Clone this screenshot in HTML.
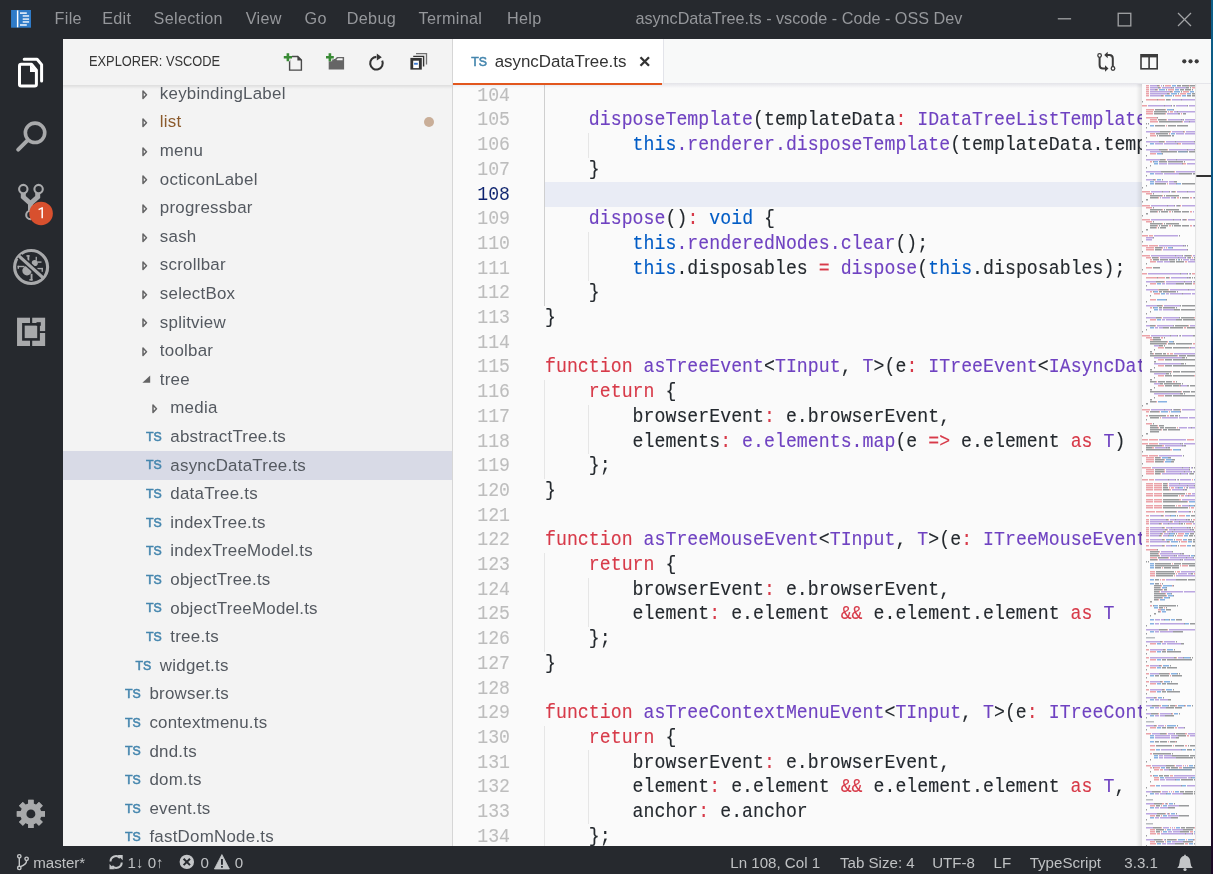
<!DOCTYPE html><html><head><meta charset="utf-8"><style>
*{margin:0;padding:0;box-sizing:border-box}
html,body{width:1213px;height:874px;overflow:hidden;-webkit-font-smoothing:antialiased;background:linear-gradient(#0d5f88 0px,#0b4f7e 300px,#0c1f52 360px,#0d1a44 430px,#1e0b2a 450px,#1c0a26 874px);font-family:"Liberation Sans",sans-serif}
.a{position:absolute}
#titlebar,#sidebar,#editor,#statusbar{will-change:transform}
#titlebar{left:0;top:0;width:1211px;height:39px;background:#26292e;color:#95979b;font-size:16.2px}
#titlebar .m{position:absolute;top:-1px;line-height:39px;white-space:nowrap;letter-spacing:0.3px}
#activity{left:0;top:39px;width:63px;height:807px;background:#26292e}
#sidebar{left:63px;top:39px;width:390px;height:807px;background:#f3f3f3;overflow:hidden}
#sbborder{left:452px;top:39px;width:1px;height:807px;background:#d6d6d6}
#sbhead{position:absolute;left:0;top:0;width:389px;height:46px;background:#f3f3f3;z-index:2}
#sbshadow{position:absolute;left:0;top:46px;width:389px;height:4px;z-index:2;background:linear-gradient(rgba(0,0,0,0.09),rgba(0,0,0,0))}
#sbhead .t{position:absolute;left:26px;top:-1px;line-height:46px;font-size:14.3px;color:#353535;transform:scaleX(0.897);transform-origin:0 0;white-space:nowrap}
.row{position:absolute;left:0;width:389px;height:28.6px;font-size:16.9px;line-height:28.6px;color:#545960;white-space:nowrap}
.row .tx{position:absolute;top:0.3px;letter-spacing:0.25px}
.row.sel{background:#d8dae6}
.ts{position:absolute;top:0;font-size:12.3px;line-height:28.6px;color:#4586ae;-webkit-text-stroke:0.55px #4586ae}
#editor{left:453px;top:39px;width:758px;height:807px;background:#fafafa;overflow:hidden}
#tabs{position:absolute;left:0;top:0;width:758px;height:44px;background:#f8f9f9}
#statusbar{left:0;top:846px;width:1211px;height:28px;background:#26292e;color:#bfc1c3;font-size:15.1px}
#statusbar .s{position:absolute;top:3px;line-height:28px;white-space:nowrap}
.ln{position:absolute;left:0;width:57px;height:24.7px;line-height:24.7px;text-align:right;font-family:"Liberation Mono",monospace;font-size:18.2px;color:#c4c4c4;-webkit-text-stroke:0.12px #c4c4c4;transform:scaleY(1.12);transform-origin:0 17.2px}
.cl{position:absolute;left:92px;height:24.7px;line-height:24.7px;font-family:"Liberation Mono",monospace;font-size:18.2px;color:#24292e;white-space:pre;letter-spacing:0.035px;-webkit-text-stroke:0.12px;transform:scaleY(1.12);transform-origin:0 17.2px}
.k{color:#d73a49}.f{color:#6f42c1}.c{color:#005cc5}
</style></head><body>
<div id="titlebar" class="a">
<svg class="a" style="left:11px;top:10px" width="20" height="18" viewBox="11 10 20 18"><rect x="11.05" y="10" width="19.95" height="17.7" fill="#2f7bc8"/><rect x="16.9" y="10.4" width="1.45" height="16.9" fill="#fff"/><g fill="#e8f0fa"><rect x="20" y="12.3" width="6.8" height="1.6"/><rect x="22.7" y="15.2" width="6.4" height="1.5"/><rect x="22.7" y="18.35" width="6.4" height="1.5"/><rect x="22.7" y="21.2" width="6.4" height="1.5"/><rect x="20" y="24.2" width="6.8" height="1.6"/></g></svg>
<span class="m" style="left:54.6px">File</span>
<span class="m" style="left:102.2px">Edit</span>
<span class="m" style="left:153.6px">Selection</span>
<span class="m" style="left:245.8px">View</span>
<span class="m" style="left:304.5px">Go</span>
<span class="m" style="left:346.8px">Debug</span>
<span class="m" style="left:418.6px">Terminal</span>
<span class="m" style="left:507px">Help</span>
<span class="m" style="left:635.4px;letter-spacing:0">asyncDataTree.ts - vscode - Code - OSS Dev</span>
<svg class="a" style="left:1050px;top:5px" width="150" height="30"><g stroke="#a2a3a5" stroke-width="1.3" fill="none"><line x1="7.8" y1="13.8" x2="21.1" y2="13.8"/><rect x="68.2" y="8.3" width="12.6" height="12.6"/><line x1="128" y1="8" x2="141" y2="21"/><line x1="141" y1="8" x2="128" y2="21"/></g></svg>
</div>
<div id="activity" class="a">
</div>
<svg class="a" style="left:0;top:0" width="63" height="874" viewBox="0 0 63 874">
<g fill="none" stroke="#ffffff" stroke-width="3" stroke-linejoin="round" stroke-linecap="round"><path d="M19.5 66 Q19.5 64.3 21.2 64.3 L31.5 64.3 L36.4 70.2 L36.4 84.3 Q36.4 86 34.7 86 L21.2 86 Q19.5 86 19.5 84.3 Z"/><path d="M24.2 59.2 L37.1 59.2 L41.6 64.6 L41.6 81"/></g><path d="M30 64.5 L30 72.1 L36.5 72.1 Z" fill="#fff"/>
<g fill="none" stroke="#a8a9ab" stroke-linecap="round"><circle cx="35.05" cy="132.8" r="9.7" stroke-width="3.6"/><line x1="18.2" y1="149.7" x2="27.5" y2="140.4" stroke-width="4"/></g>
<g fill="none" stroke="#a8a9ab"><circle cx="23.3" cy="189.1" r="4.2" stroke-width="2.1"/><circle cx="38.6" cy="189.1" r="4.2" stroke-width="2.1"/><circle cx="30.4" cy="214.9" r="4.2" stroke-width="2.1"/><path d="M23.3 193 L23.3 197 L30.5 203.5 L37.7 197 L37.7 193 M30.5 203.5 L30.5 211" stroke-width="5" stroke-linejoin="miter"/></g>
<circle cx="41.05" cy="213.45" r="11.8" fill="#d8502e"/><path d="M38.6 209.6 L42.2 207.8 L42.2 218.2" fill="none" stroke="#fff" stroke-width="1.5" stroke-linejoin="round"/>
<g fill="#a8a9ab"><circle cx="31.1" cy="267" r="16.5" fill="none" stroke="#a8a9ab" stroke-width="3.1"/><circle cx="34.8" cy="263" r="3.1"/><circle cx="27" cy="270.7" r="4.7"/><rect x="27.4" y="255.2" width="1.9" height="5.5"/><rect x="26.4" y="255.2" width="3.2" height="1.4"/><rect x="35.6" y="256.8" width="1.3" height="3.8"/><rect x="37.6" y="261.4" width="3.9" height="1.4"/><rect x="17.6" y="265.8" width="6.9" height="1.4"/><rect x="17.6" y="265.8" width="1.4" height="3"/><rect x="37.2" y="267.9" width="5.7" height="1.4"/><rect x="41.6" y="267.9" width="1.3" height="3.9"/><rect x="30.6" y="273.8" width="1.9" height="6.7"/><rect x="29.3" y="279.1" width="3.3" height="1.4"/></g><line x1="19.3" y1="256.3" x2="42.2" y2="277" stroke="#26292e" stroke-width="6"/><line x1="18.8" y1="255.9" x2="42.6" y2="277.4" stroke="#a8a9ab" stroke-width="3.3"/>
<g><rect x="17.04" y="317.7" width="28.1" height="28.3" fill="#a8a9ab"/><rect x="22.1" y="323" width="17.8" height="17.7" fill="#26292e"/><rect x="24.7" y="325.6" width="12.5" height="12.5" fill="#a8a9ab"/><rect x="30" y="317" width="2.2" height="6.5" fill="#26292e"/><rect x="30" y="340" width="2.2" height="7" fill="#26292e"/><rect x="39.5" y="331.1" width="6.5" height="1.9" fill="#26292e"/><rect x="36.5" y="322.2" width="4.3" height="3.6" fill="#26292e"/></g>
<g fill="#a8a9ab"><circle cx="30.9" cy="813.9" r="10.6"/><rect x="28.2" y="799.8" width="5.4" height="28.2" transform="rotate(0 30.9 813.9)"/><rect x="28.2" y="799.8" width="5.4" height="28.2" transform="rotate(45 30.9 813.9)"/><rect x="28.2" y="799.8" width="5.4" height="28.2" transform="rotate(90 30.9 813.9)"/><rect x="28.2" y="799.8" width="5.4" height="28.2" transform="rotate(135 30.9 813.9)"/><rect x="28.2" y="799.8" width="5.4" height="28.2" transform="rotate(180 30.9 813.9)"/><rect x="28.2" y="799.8" width="5.4" height="28.2" transform="rotate(225 30.9 813.9)"/><rect x="28.2" y="799.8" width="5.4" height="28.2" transform="rotate(270 30.9 813.9)"/><rect x="28.2" y="799.8" width="5.4" height="28.2" transform="rotate(315 30.9 813.9)"/></g><circle cx="30.9" cy="813.9" r="4.45" fill="#26292e"/>
</svg>
<div id="sidebar" class="a"><div id="sbhead"><span class="t">EXPLORER: VSCODE</span><svg class="a" style="left:0;top:0" width="389" height="46" viewBox="63 39 389 46"><path d="M289.6 56.5 L297.8 56.5 L301.4 60 L301.4 70.1 L289.6 70.1 Z" fill="#f3f3f3" stroke="#4a4a4a" stroke-width="1.4"/><path d="M297.4 55.8 L302.1 60.5 L297.4 60.5 Z" fill="#424242"/><path d="M283.8 57.2 L292 57.2 M287.9 53.2 L287.9 61.3" stroke="#f3f3f3" stroke-width="4.6"/><path d="M283.8 57.2 L292 57.2 M287.9 53.2 L287.9 61.3" stroke="#388a34" stroke-width="2.6"/><path d="M328.7 59 L335 59 L337 57 L344.1 57 L344.1 69.5 L328.7 69.5 Z" fill="#656565"/><path d="M336.5 59.3 L338 58.3 L342.6 58.3 L342.6 60.3 L337 60.3 Z" fill="#f3f3f3"/><path d="M326 57.2 L333.8 57.2 M329.9 53.2 L329.9 61.3" stroke="#f3f3f3" stroke-width="4.5"/><path d="M326 57.2 L333.8 57.2 M329.9 53.2 L329.9 61.3" stroke="#388a34" stroke-width="2.6"/><path d="M376.4 56.9 A6.3 6.3 0 1 0 382.2 60.6" fill="none" stroke="#333" stroke-width="2.1"/><path d="M376.8 53.6 L381.8 57.2 L376.8 60.6 Z" fill="#333"/><path d="M416 53.6 L426.5 53.6 L426.5 64.4" fill="none" stroke="#707070" stroke-width="1.3"/><path d="M413.2 56.4 L423.6 56.4 L423.6 66.5" fill="none" stroke="#333" stroke-width="1.4"/><rect x="410.4" y="57.9" width="11.4" height="11.7" fill="#333"/><rect x="413.2" y="60.7" width="5.7" height="7.4" fill="#fff"/><rect x="414.1" y="62.8" width="3.7" height="1.9" fill="#3b7bd4"/></svg></div><div id="sbshadow"></div>
<div class="row" style="top:40.50px">
<svg class="a" style="left:78.80000000000001px;top:9px" width="8" height="11"><path d="M1.0 2.1 L4.5 5.75 L1.0 9.4 Z" fill="none" stroke="#646465" stroke-width="1.5" stroke-linejoin="round"/></svg>
<span class="tx" style="left:96.80000000000001px"><span>keybindingLabel</span></span>
</div>
<div class="row" style="top:69.10px">
<svg class="a" style="left:78.80000000000001px;top:9px" width="8" height="11"><path d="M1.0 2.1 L4.5 5.75 L1.0 9.4 Z" fill="none" stroke="#646465" stroke-width="1.5" stroke-linejoin="round"/></svg>
<span class="tx" style="left:96.80000000000001px"><span style="color:#8b5a2b">list</span></span>
<div class="a" style="left:361px;top:9.3px;width:10px;height:10px;border-radius:50%;background:#c9ae98"></div>
</div>
<div class="row" style="top:97.70px">
<svg class="a" style="left:78.80000000000001px;top:9px" width="8" height="11"><path d="M1.0 2.1 L4.5 5.75 L1.0 9.4 Z" fill="none" stroke="#646465" stroke-width="1.5" stroke-linejoin="round"/></svg>
<span class="tx" style="left:96.80000000000001px"><span>menu</span></span>
</div>
<div class="row" style="top:126.30px">
<svg class="a" style="left:78.80000000000001px;top:9px" width="8" height="11"><path d="M1.0 2.1 L4.5 5.75 L1.0 9.4 Z" fill="none" stroke="#646465" stroke-width="1.5" stroke-linejoin="round"/></svg>
<span class="tx" style="left:96.80000000000001px"><span>octiconLabel</span></span>
</div>
<div class="row" style="top:154.90px">
<svg class="a" style="left:78.80000000000001px;top:9px" width="8" height="11"><path d="M1.0 2.1 L4.5 5.75 L1.0 9.4 Z" fill="none" stroke="#646465" stroke-width="1.5" stroke-linejoin="round"/></svg>
<span class="tx" style="left:96.80000000000001px"><span>progressbar</span></span>
</div>
<div class="row" style="top:183.50px">
<svg class="a" style="left:78.80000000000001px;top:9px" width="8" height="11"><path d="M1.0 2.1 L4.5 5.75 L1.0 9.4 Z" fill="none" stroke="#646465" stroke-width="1.5" stroke-linejoin="round"/></svg>
<span class="tx" style="left:96.80000000000001px"><span>sash</span></span>
</div>
<div class="row" style="top:212.10px">
<svg class="a" style="left:78.80000000000001px;top:9px" width="8" height="11"><path d="M1.0 2.1 L4.5 5.75 L1.0 9.4 Z" fill="none" stroke="#646465" stroke-width="1.5" stroke-linejoin="round"/></svg>
<span class="tx" style="left:96.80000000000001px"><span>scrollbar</span></span>
</div>
<div class="row" style="top:240.70px">
<svg class="a" style="left:78.80000000000001px;top:9px" width="8" height="11"><path d="M1.0 2.1 L4.5 5.75 L1.0 9.4 Z" fill="none" stroke="#646465" stroke-width="1.5" stroke-linejoin="round"/></svg>
<span class="tx" style="left:96.80000000000001px"><span>selectBox</span></span>
</div>
<div class="row" style="top:269.30px">
<svg class="a" style="left:78.80000000000001px;top:9px" width="8" height="11"><path d="M1.0 2.1 L4.5 5.75 L1.0 9.4 Z" fill="none" stroke="#646465" stroke-width="1.5" stroke-linejoin="round"/></svg>
<span class="tx" style="left:96.80000000000001px"><span>splitview</span></span>
</div>
<div class="row" style="top:297.90px">
<svg class="a" style="left:78.80000000000001px;top:9px" width="8" height="11"><path d="M1.0 2.1 L4.5 5.75 L1.0 9.4 Z" fill="none" stroke="#646465" stroke-width="1.5" stroke-linejoin="round"/></svg>
<span class="tx" style="left:96.80000000000001px"><span>toolbar</span></span>
</div>
<div class="row" style="top:326.50px">
<svg class="a" style="left:78.60000000000001px;top:9.4px" width="9" height="9"><path d="M8.2 0.4 L8.2 7.8 L0.4 7.8 Z" fill="#646465"/></svg>
<span class="tx" style="left:96.80000000000001px"><span>tree</span></span>
</div>
<div class="row" style="top:355.10px">
<svg class="a" style="left:89.30000000000001px;top:9px" width="8" height="11"><path d="M1.0 2.1 L4.5 5.75 L1.0 9.4 Z" fill="none" stroke="#646465" stroke-width="1.5" stroke-linejoin="round"/></svg>
<span class="tx" style="left:107.30000000000001px"><span>media</span></span>
</div>
<div class="row" style="top:383.70px">
<span class="ts" style="left:83.00000000000001px">TS</span>
<span class="tx" style="left:107.30000000000001px"><span>abstractTree.ts</span></span>
</div>
<div class="row sel" style="top:412.30px">
<span class="ts" style="left:83.00000000000001px">TS</span>
<span class="tx" style="left:107.30000000000001px"><span>asyncDataTree.ts</span></span>
</div>
<div class="row" style="top:440.90px">
<span class="ts" style="left:83.00000000000001px">TS</span>
<span class="tx" style="left:107.30000000000001px"><span>dataTree.ts</span></span>
</div>
<div class="row" style="top:469.50px">
<span class="ts" style="left:83.00000000000001px">TS</span>
<span class="tx" style="left:107.30000000000001px"><span>indexTree.ts</span></span>
</div>
<div class="row" style="top:498.10px">
<span class="ts" style="left:83.00000000000001px">TS</span>
<span class="tx" style="left:107.30000000000001px"><span>indexTreeModel.ts</span></span>
</div>
<div class="row" style="top:526.70px">
<span class="ts" style="left:83.00000000000001px">TS</span>
<span class="tx" style="left:107.30000000000001px"><span>objectTree.ts</span></span>
</div>
<div class="row" style="top:555.30px">
<span class="ts" style="left:83.00000000000001px">TS</span>
<span class="tx" style="left:107.30000000000001px"><span>objectTreeModel.ts</span></span>
</div>
<div class="row" style="top:583.90px">
<span class="ts" style="left:83.00000000000001px">TS</span>
<span class="tx" style="left:107.30000000000001px"><span>tree.ts</span></span>
</div>
<div class="row" style="top:612.50px">
<span class="ts" style="left:72.50000000000001px">TS</span>
<span class="tx" style="left:96.80000000000001px"><span>widget.ts</span></span>
</div>
<div class="row" style="top:641.10px">
<span class="ts" style="left:62.10000000000001px">TS</span>
<span class="tx" style="left:86.4px"><span>browser.ts</span></span>
</div>
<div class="row" style="top:669.70px">
<span class="ts" style="left:62.10000000000001px">TS</span>
<span class="tx" style="left:86.4px"><span>contextmenu.ts</span></span>
</div>
<div class="row" style="top:698.30px">
<span class="ts" style="left:62.10000000000001px">TS</span>
<span class="tx" style="left:86.4px"><span>dnd.ts</span></span>
</div>
<div class="row" style="top:726.90px">
<span class="ts" style="left:62.10000000000001px">TS</span>
<span class="tx" style="left:86.4px"><span>dom.ts</span></span>
</div>
<div class="row" style="top:755.50px">
<span class="ts" style="left:62.10000000000001px">TS</span>
<span class="tx" style="left:86.4px"><span>event.ts</span></span>
</div>
<div class="row" style="top:784.10px">
<span class="ts" style="left:62.10000000000001px">TS</span>
<span class="tx" style="left:86.4px"><span>fastDomNode.ts</span></span>
</div>
</div><div id="sbborder" class="a"></div>
<div id="editor" class="a">
<div id="tabs">
<div class="a" style="left:0;top:0;width:209.5px;height:44px;background:#ffffff"></div>
<div class="a" style="left:0;top:43.9px;width:209px;height:2.1px;background:#e2571e;z-index:4"></div>
<div class="a" style="left:209.5px;top:0;width:1px;height:44px;background:#e3e4ea"></div>
<span class="a" style="left:18.3px;top:1px;line-height:45px;font-size:12.3px;color:#4586ae;-webkit-text-stroke:0.55px #4586ae">TS</span>
<span class="a" style="left:41.7px;top:0;line-height:45px;font-size:16.9px;color:#333333">asyncDataTree.ts</span>
<svg class="a" style="left:186px;top:17px" width="12" height="11"><path d="M1.5 1.2 L10 9.8 M10 1.2 L1.5 9.8" stroke="#333" stroke-width="2.3"/></svg>
<svg class="a" style="left:640px;top:10px" width="110" height="26" viewBox="1093 49 110 26"><g fill="none" stroke="#3c3c3c" stroke-width="2"><path d="M1099.6 55.5 L1099.6 65 Q1099.6 68.5 1103 68.5 L1106 68.5"/><path d="M1112.8 68 L1112.8 58.5 Q1112.8 55 1109.5 55 L1106.5 55"/></g><circle cx="1099.6" cy="55.5" r="1.8" fill="#fff" stroke="#3c3c3c" stroke-width="1.3"/><circle cx="1113" cy="68.5" r="1.8" fill="#fff" stroke="#3c3c3c" stroke-width="1.3"/><path d="M1105 65.3 L1108.5 68.5 L1105 71.7 Z M1107.7 51.8 L1104.2 55 L1107.7 58.2 Z" fill="#3c3c3c"/><rect x="1141" y="54.8" width="16.2" height="14" fill="none" stroke="#3c3c3c" stroke-width="1.6"/><rect x="1141" y="54.8" width="16.2" height="2.6" fill="#3c3c3c"/><rect x="1148.3" y="55" width="1.6" height="14" fill="#3c3c3c"/><circle cx="1184.3" cy="61.3" r="2.1" fill="#3c3c3c"/><circle cx="1190.5" cy="61.3" r="2.1" fill="#3c3c3c"/><circle cx="1196.7" cy="61.3" r="2.1" fill="#3c3c3c"/></svg>
</div>
<div class="a" style="left:0;top:44px;width:758px;height:5px;background:linear-gradient(rgba(40,40,90,0.11),rgba(40,40,90,0));z-index:3"></div>
<div class="a" style="left:92px;top:143.30px;width:597px;height:24.7px;background:#e9ecf5"></div>
<div class="a" style="left:91px;top:46.00px;width:1px;height:220.80px;background:#cfcfcf"></div>
<div class="a" style="left:134.68px;top:93.90px;width:1px;height:24.70px;background:#e6e6e6"></div>
<div class="a" style="left:134.68px;top:192.70px;width:1px;height:49.40px;background:#e6e6e6"></div>
<div class="a" style="left:91px;top:340.90px;width:1px;height:98.80px;background:#e6e6e6"></div>
<div class="a" style="left:91px;top:513.80px;width:1px;height:98.80px;background:#e6e6e6"></div>
<div class="a" style="left:91px;top:686.70px;width:1px;height:123.50px;background:#e6e6e6"></div>
<div class="a" style="left:134.68px;top:365.60px;width:1px;height:49.40px;background:#e6e6e6"></div>
<div class="a" style="left:134.68px;top:538.50px;width:1px;height:49.40px;background:#e6e6e6"></div>
<div class="a" style="left:134.68px;top:711.40px;width:1px;height:74.10px;background:#e6e6e6"></div>
<div class="a" style="left:0;top:0;width:689px;height:807px;overflow:hidden">
<div class="ln" style="top:44.70px;color:#bdbdbd">104</div>
<div class="ln" style="top:69.40px;color:#bdbdbd">105</div>
<div class="cl" style="top:69.40px">    <span class="f">disposeTemplate</span>(templateData<span class="k">:</span> <span class="f">IDataTreeListTemplateData</span></div>
<div class="ln" style="top:94.10px;color:#bdbdbd">106</div>
<div class="cl" style="top:94.10px">        <span class="c">this</span><span class="f">.renderer.disposeTemplate</span>(templateData.templateData);</div>
<div class="ln" style="top:118.80px;color:#bdbdbd">107</div>
<div class="cl" style="top:118.80px">    }</div>
<div class="ln" style="top:143.50px;color:#0b216f">108</div>
<div class="ln" style="top:168.20px;color:#bdbdbd">109</div>
<div class="cl" style="top:168.20px">    <span class="f">dispose</span>()<span class="k">:</span> <span class="c">void</span> {</div>
<div class="ln" style="top:192.90px;color:#bdbdbd">110</div>
<div class="cl" style="top:192.90px">        <span class="c">this</span><span class="f">.renderedNodes.clear</span>();</div>
<div class="ln" style="top:217.60px;color:#bdbdbd">111</div>
<div class="cl" style="top:217.60px">        <span class="c">this</span>.disposables <span class="k">=</span> <span class="f">dispose</span>(<span class="c">this</span>.disposables);</div>
<div class="ln" style="top:242.30px;color:#bdbdbd">112</div>
<div class="cl" style="top:242.30px">    }</div>
<div class="ln" style="top:267.00px;color:#bdbdbd">113</div>
<div class="cl" style="top:267.00px">}</div>
<div class="ln" style="top:291.70px;color:#bdbdbd">114</div>
<div class="ln" style="top:316.40px;color:#bdbdbd">115</div>
<div class="cl" style="top:316.40px"><span class="k">function</span> <span class="f">asTreeEvent</span><<span class="f">TInput</span>, <span class="f">T</span>>(e<span class="k">:</span> <span class="f">ITreeEvent</span><<span class="f">IAsyncDataTreeNode</span></div>
<div class="ln" style="top:341.10px;color:#bdbdbd">116</div>
<div class="cl" style="top:341.10px">    <span class="k">return</span> {</div>
<div class="ln" style="top:365.80px;color:#bdbdbd">117</div>
<div class="cl" style="top:365.80px">        browserEvent<span class="k">:</span> e.browserEvent,</div>
<div class="ln" style="top:390.50px;color:#bdbdbd">118</div>
<div class="cl" style="top:390.50px">        elements<span class="k">:</span> <span class="f">e.elements.map</span>(e <span class="k">=></span> e.element <span class="k">as</span> <span class="f">T</span>)</div>
<div class="ln" style="top:415.20px;color:#bdbdbd">119</div>
<div class="cl" style="top:415.20px">    };</div>
<div class="ln" style="top:439.90px;color:#bdbdbd">120</div>
<div class="cl" style="top:439.90px">}</div>
<div class="ln" style="top:464.60px;color:#bdbdbd">121</div>
<div class="ln" style="top:489.30px;color:#bdbdbd">122</div>
<div class="cl" style="top:489.30px"><span class="k">function</span> <span class="f">asTreeMouseEvent</span><<span class="f">TInput</span>, <span class="f">T</span>>(e<span class="k">:</span> <span class="f">ITreeMouseEvent</span><<span class="f">IAsyncDataTreeNode</span></div>
<div class="ln" style="top:514.00px;color:#bdbdbd">123</div>
<div class="cl" style="top:514.00px">    <span class="k">return</span> {</div>
<div class="ln" style="top:538.70px;color:#bdbdbd">124</div>
<div class="cl" style="top:538.70px">        browserEvent<span class="k">:</span> e.browserEvent,</div>
<div class="ln" style="top:563.40px;color:#bdbdbd">125</div>
<div class="cl" style="top:563.40px">        element<span class="k">:</span> e.element <span class="k">&amp;&amp;</span> e.element.element <span class="k">as</span> <span class="f">T</span></div>
<div class="ln" style="top:588.10px;color:#bdbdbd">126</div>
<div class="cl" style="top:588.10px">    };</div>
<div class="ln" style="top:612.80px;color:#bdbdbd">127</div>
<div class="cl" style="top:612.80px">}</div>
<div class="ln" style="top:637.50px;color:#bdbdbd">128</div>
<div class="ln" style="top:662.20px;color:#bdbdbd">129</div>
<div class="cl" style="top:662.20px"><span class="k">function</span> <span class="f">asTreeContextMenuEvent</span><<span class="f">TInput</span>, <span class="f">T</span>>(e<span class="k">:</span> <span class="f">ITreeContextMenuEvent</span><<span class="f">IAsyncDataTreeNode</span></div>
<div class="ln" style="top:686.90px;color:#bdbdbd">130</div>
<div class="cl" style="top:686.90px">    <span class="k">return</span> {</div>
<div class="ln" style="top:711.60px;color:#bdbdbd">131</div>
<div class="cl" style="top:711.60px">        browserEvent<span class="k">:</span> e.browserEvent,</div>
<div class="ln" style="top:736.30px;color:#bdbdbd">132</div>
<div class="cl" style="top:736.30px">        element<span class="k">:</span> e.element <span class="k">&amp;&amp;</span> e.element.element <span class="k">as</span> <span class="f">T</span>,</div>
<div class="ln" style="top:761.00px;color:#bdbdbd">133</div>
<div class="cl" style="top:761.00px">        anchor<span class="k">:</span> e.anchor</div>
<div class="ln" style="top:785.70px;color:#bdbdbd">134</div>
<div class="cl" style="top:785.70px">    };</div>
</div>
</div>
<svg class="a" style="left:1136px;top:84px;z-index:2" width="75" height="762" viewBox="1136 84 75 762"><defs><linearGradient id="msh" x1="0" x2="1"><stop offset="0" stop-color="#000" stop-opacity="0"/><stop offset="1" stop-color="#000" stop-opacity="0.10"/></linearGradient></defs><rect x="1136" y="84" width="6" height="762" fill="url(#msh)"/><rect x="1142" y="84" width="54" height="762" fill="#fcfcfc"/><path fill="#d73a49" fill-opacity="0.46" d="M1146 85h3v1.4h-3zM1159 85h1v1.4h-1zM1165 85h6v1.4h-6zM1189 85h1v1.4h-1zM1146 87h3v1.4h-3zM1160 87h1v1.4h-1zM1192 87h3v1.4h-3zM1146 89h3v1.4h-3zM1157 89h1v1.4h-1zM1168 89h6v1.4h-6zM1146 91h3v1.4h-3zM1172 91h1v1.4h-1zM1183 91h6v1.4h-6zM1146 93h3v1.4h-3zM1169 93h1v1.4h-1zM1180 93h6v1.4h-6zM1146 95h3v1.4h-3zM1163 95h1v1.4h-1zM1175 95h6v1.4h-6zM1146 99h11v1.4h-11zM1158 99h7v1.4h-7zM1170 99h1v1.4h-1zM1142 105h5v1.4h-5zM1146 109h8v1.4h-8zM1165 109h1v1.4h-1zM1146 111h7v1.4h-7zM1168 111h1v1.4h-1zM1170 111h3v1.4h-3zM1146 113h7v1.4h-7zM1165 113h1v1.4h-1zM1181 113h1v1.4h-1zM1146 117h11v1.4h-11zM1150 119h7v1.4h-7zM1166 119h1v1.4h-1zM1150 121h8v1.4h-8zM1182 121h1v1.4h-1zM1166 125h1v1.4h-1zM1170 131h1v1.4h-1zM1184 131h1v1.4h-1zM1150 133h5v1.4h-5zM1169 133h1v1.4h-1zM1150 135h6v1.4h-6zM1164 141h1v1.4h-1zM1178 143h3v1.4h-3zM1167 149h1v1.4h-1zM1150 153h6v1.4h-6zM1165 159h1v1.4h-1zM1150 161h2v1.4h-2zM1183 163h3v1.4h-3zM1174 171h1v1.4h-1zM1155 179h1v1.4h-1zM1167 183h1v1.4h-1zM1142 191h8v1.4h-8zM1175 191h1v1.4h-1zM1146 193h6v1.4h-6zM1162 195h1v1.4h-1zM1158 197h1v1.4h-1zM1177 197h2v1.4h-2zM1190 197h2v1.4h-2zM1142 205h8v1.4h-8zM1180 205h1v1.4h-1zM1146 207h6v1.4h-6zM1162 209h1v1.4h-1zM1157 211h1v1.4h-1zM1169 211h2v1.4h-2zM1190 211h2v1.4h-2zM1142 219h8v1.4h-8zM1186 219h1v1.4h-1zM1146 221h6v1.4h-6zM1162 223h1v1.4h-1zM1157 225h1v1.4h-1zM1169 225h2v1.4h-2zM1190 225h2v1.4h-2zM1156 227h1v1.4h-1zM1142 235h6v1.4h-6zM1149 235h4v1.4h-4zM1142 245h6v1.4h-6zM1149 245h9v1.4h-9zM1146 247h8v1.4h-8zM1162 247h1v1.4h-1zM1166 247h1v1.4h-1zM1146 249h8v1.4h-8zM1161 249h1v1.4h-1zM1142 255h8v1.4h-8zM1191 255h1v1.4h-1zM1146 257h5v1.4h-5zM1158 257h1v1.4h-1zM1192 257h1v1.4h-1zM1150 259h2v1.4h-2zM1150 261h6v1.4h-6zM1185 261h2v1.4h-2zM1146 267h6v1.4h-6zM1142 273h5v1.4h-5zM1192 273h3v1.4h-3zM1146 277h11v1.4h-11zM1158 277h7v1.4h-7zM1169 277h1v1.4h-1zM1164 281h1v1.4h-1zM1150 283h6v1.4h-6zM1193 283h2v1.4h-2zM1158 289h1v1.4h-1zM1168 289h1v1.4h-1zM1150 291h2v1.4h-2zM1154 293h6v1.4h-6zM1150 299h6v1.4h-6zM1162 305h1v1.4h-1zM1150 307h2v1.4h-2zM1161 317h1v1.4h-1zM1194 317h1v1.4h-1zM1150 319h6v1.4h-6zM1155 325h1v1.4h-1zM1188 325h1v1.4h-1zM1184 327h2v1.4h-2zM1142 335h8v1.4h-8zM1146 337h6v1.4h-6zM1161 337h2v1.4h-2zM1150 339h3v1.4h-3zM1167 341h1v1.4h-1zM1166 343h1v1.4h-1zM1193 343h2v1.4h-2zM1158 347h6v1.4h-6zM1189 347h1v1.4h-1zM1153 353h1v1.4h-1zM1167 353h2v1.4h-2zM1170 353h3v1.4h-3zM1177 355h1v1.4h-1zM1158 359h6v1.4h-6zM1158 365h6v1.4h-6zM1171 371h1v1.4h-1zM1158 375h6v1.4h-6zM1194 375h1v1.4h-1zM1156 381h1v1.4h-1zM1173 381h2v1.4h-2zM1158 385h6v1.4h-6zM1179 385h1v1.4h-1zM1181 391h1v1.4h-1zM1158 395h6v1.4h-6zM1156 401h1v1.4h-1zM1142 409h8v1.4h-8zM1180 409h1v1.4h-1zM1146 411h3v1.4h-3zM1159 411h1v1.4h-1zM1169 411h1v1.4h-1zM1146 415h2v1.4h-2zM1167 415h2v1.4h-2zM1160 417h1v1.4h-1zM1146 423h6v1.4h-6zM1157 425h1v1.4h-1zM1158 427h1v1.4h-1zM1177 427h1v1.4h-1zM1161 429h1v1.4h-1zM1142 439h6v1.4h-6zM1149 439h9v1.4h-9zM1187 439h7v1.4h-7zM1142 443h6v1.4h-6zM1149 443h9v1.4h-9zM1162 445h1v1.4h-1zM1163 445h1v1.4h-1zM1152 447h1v1.4h-1zM1153 447h1v1.4h-1zM1170 449h1v1.4h-1zM1171 449h1v1.4h-1zM1142 455h6v1.4h-6zM1149 455h9v1.4h-9zM1146 457h8v1.4h-8zM1160 457h1v1.4h-1zM1146 459h8v1.4h-8zM1164 459h1v1.4h-1zM1146 461h8v1.4h-8zM1163 461h1v1.4h-1zM1142 467h9v1.4h-9zM1146 469h8v1.4h-8zM1164 469h1v1.4h-1zM1146 471h8v1.4h-8zM1164 471h1v1.4h-1zM1146 473h8v1.4h-8zM1160 473h1v1.4h-1zM1142 479h6v1.4h-6zM1149 479h5v1.4h-5zM1192 479h1v1.4h-1zM1146 483h7v1.4h-7zM1154 483h8v1.4h-8zM1167 483h1v1.4h-1zM1146 485h7v1.4h-7zM1154 485h8v1.4h-8zM1167 485h1v1.4h-1zM1146 487h7v1.4h-7zM1154 487h8v1.4h-8zM1169 487h1v1.4h-1zM1171 487h3v1.4h-3zM1184 487h1v1.4h-1zM1146 489h7v1.4h-7zM1154 489h8v1.4h-8zM1169 489h1v1.4h-1zM1170 489h1v1.4h-1zM1146 493h7v1.4h-7zM1154 493h8v1.4h-8zM1186 493h1v1.4h-1zM1188 493h3v1.4h-3zM1146 495h7v1.4h-7zM1154 495h8v1.4h-8zM1179 495h1v1.4h-1zM1181 495h3v1.4h-3zM1146 499h7v1.4h-7zM1154 499h8v1.4h-8zM1179 499h1v1.4h-1zM1180 499h1v1.4h-1zM1146 501h7v1.4h-7zM1154 501h8v1.4h-8zM1187 501h1v1.4h-1zM1146 505h7v1.4h-7zM1154 505h8v1.4h-8zM1176 505h1v1.4h-1zM1178 505h3v1.4h-3zM1146 507h7v1.4h-7zM1154 507h8v1.4h-8zM1189 507h1v1.4h-1zM1191 507h3v1.4h-3zM1146 511h9v1.4h-9zM1156 511h8v1.4h-8zM1176 511h1v1.4h-1zM1192 511h1v1.4h-1zM1146 515h3v1.4h-3zM1163 515h1v1.4h-1zM1179 515h6v1.4h-6zM1146 519h3v1.4h-3zM1168 519h1v1.4h-1zM1193 519h2v1.4h-2zM1146 521h3v1.4h-3zM1172 521h1v1.4h-1zM1146 523h3v1.4h-3zM1161 523h1v1.4h-1zM1186 523h6v1.4h-6zM1146 527h3v1.4h-3zM1164 527h1v1.4h-1zM1194 527h1v1.4h-1zM1146 529h3v1.4h-3zM1167 529h1v1.4h-1zM1146 531h3v1.4h-3zM1165 531h1v1.4h-1zM1146 533h3v1.4h-3zM1162 533h1v1.4h-1zM1178 533h6v1.4h-6zM1146 535h3v1.4h-3zM1161 535h1v1.4h-1zM1177 535h6v1.4h-6zM1146 539h3v1.4h-3zM1164 539h1v1.4h-1zM1176 539h6v1.4h-6zM1146 541h3v1.4h-3zM1169 541h1v1.4h-1zM1181 541h6v1.4h-6zM1146 545h3v1.4h-3zM1164 545h1v1.4h-1zM1180 545h6v1.4h-6zM1146 549h11v1.4h-11zM1159 551h1v1.4h-1zM1158 553h1v1.4h-1zM1159 555h1v1.4h-1zM1150 557h7v1.4h-7zM1168 557h1v1.4h-1zM1157 559h1v1.4h-1zM1172 563h1v1.4h-1zM1180 565h1v1.4h-1zM1182 565h6v1.4h-6zM1162 567h1v1.4h-1zM1150 571h5v1.4h-5zM1175 571h1v1.4h-1zM1177 571h3v1.4h-3zM1150 573h5v1.4h-5zM1176 573h1v1.4h-1zM1194 573h1v1.4h-1zM1150 575h5v1.4h-5zM1174 575h1v1.4h-1zM1160 579h1v1.4h-1zM1162 579h3v1.4h-3zM1160 583h1v1.4h-1zM1161 585h1v1.4h-1zM1172 585h1v1.4h-1zM1160 587h1v1.4h-1zM1162 589h1v1.4h-1zM1159 591h1v1.4h-1zM1165 593h1v1.4h-1zM1166 595h1v1.4h-1zM1162 597h1v1.4h-1zM1158 599h1v1.4h-1zM1150 605h2v1.4h-2zM1164 607h1v1.4h-1zM1158 609h3v1.4h-3zM1160 611h1v1.4h-1zM1167 629h1v1.4h-1zM1162 641h1v1.4h-1zM1150 643h6v1.4h-6zM1146 649h3v1.4h-3zM1165 649h1v1.4h-1zM1150 651h6v1.4h-6zM1146 657h3v1.4h-3zM1176 657h1v1.4h-1zM1150 659h6v1.4h-6zM1146 665h3v1.4h-3zM1161 665h1v1.4h-1zM1150 667h6v1.4h-6zM1146 673h3v1.4h-3zM1169 673h1v1.4h-1zM1170 675h1v1.4h-1zM1146 681h3v1.4h-3zM1162 681h1v1.4h-1zM1150 683h6v1.4h-6zM1146 689h3v1.4h-3zM1164 689h1v1.4h-1zM1150 691h6v1.4h-6zM1156 697h1v1.4h-1zM1159 705h1v1.4h-1zM1160 705h1v1.4h-1zM1175 705h1v1.4h-1zM1176 705h1v1.4h-1zM1185 705h1v1.4h-1zM1158 713h1v1.4h-1zM1172 713h1v1.4h-1zM1156 725h1v1.4h-1zM1165 725h1v1.4h-1zM1150 727h6v1.4h-6zM1175 727h2v1.4h-2zM1146 733h5v1.4h-5zM1166 733h1v1.4h-1zM1185 733h1v1.4h-1zM1186 733h1v1.4h-1zM1187 735h2v1.4h-2zM1168 741h1v1.4h-1zM1175 741h1v1.4h-1zM1150 745h5v1.4h-5zM1173 745h1v1.4h-1zM1185 745h2v1.4h-2zM1150 749h5v1.4h-5zM1150 753h2v1.4h-2zM1146 765h5v1.4h-5zM1174 765h1v1.4h-1zM1183 765h1v1.4h-1zM1187 765h1v1.4h-1zM1150 767h2v1.4h-2zM1154 767h6v1.4h-6zM1179 767h3v1.4h-3zM1154 769h5v1.4h-5zM1160 769h3v1.4h-3zM1150 775h2v1.4h-2zM1170 775h3v1.4h-3zM1154 777h5v1.4h-5zM1154 779h5v1.4h-5zM1150 785h5v1.4h-5zM1160 791h1v1.4h-1zM1169 791h1v1.4h-1zM1173 791h1v1.4h-1zM1162 803h1v1.4h-1zM1163 803h1v1.4h-1zM1167 803h1v1.4h-1zM1150 805h5v1.4h-5zM1161 805h1v1.4h-1zM1165 813h1v1.4h-1zM1169 813h1v1.4h-1zM1150 815h5v1.4h-5zM1161 815h1v1.4h-1zM1161 827h1v1.4h-1zM1170 827h1v1.4h-1zM1174 827h1v1.4h-1zM1194 827h1v1.4h-1zM1150 829h5v1.4h-5zM1165 829h1v1.4h-1zM1150 831h5v1.4h-5zM1161 831h1v1.4h-1zM1190 831h3v1.4h-3zM1150 833h6v1.4h-6zM1157 833h3v1.4h-3zM1162 839h1v1.4h-1zM1176 839h1v1.4h-1zM1186 839h1v1.4h-1zM1194 839h1v1.4h-1zM1150 841h5v1.4h-5zM1165 841h1v1.4h-1zM1150 843h6v1.4h-6zM1185 843h3v1.4h-3z"/><path fill="#6f42c1" fill-opacity="0.46" d="M1150 85h7v1.4h-7zM1161 85h1v1.4h-1zM1150 87h8v1.4h-8zM1162 87h9v1.4h-9zM1172 87h1v1.4h-1zM1175 87h11v1.4h-11zM1150 89h5v1.4h-5zM1150 91h20v1.4h-20zM1150 93h17v1.4h-17zM1150 95h11v1.4h-11zM1172 99h9v1.4h-9zM1182 99h13v1.4h-13zM1148 105h16v1.4h-16zM1165 105h6v1.4h-6zM1173 105h1v1.4h-1zM1176 105h11v1.4h-11zM1189 105h6v1.4h-6zM1174 111h3v1.4h-3zM1178 111h17v1.4h-17zM1167 113h11v1.4h-11zM1168 119h13v1.4h-13zM1182 119h1v1.4h-1zM1185 119h10v1.4h-10zM1184 121h5v1.4h-5zM1190 121h5v1.4h-5zM1146 131h14v1.4h-14zM1172 131h11v1.4h-11zM1186 131h9v1.4h-9zM1176 133h8v1.4h-8zM1185 133h10v1.4h-10zM1146 141h13v1.4h-13zM1166 141h9v1.4h-9zM1176 141h18v1.4h-18zM1155 143h8v1.4h-8zM1164 143h13v1.4h-13zM1182 143h13v1.4h-13zM1146 149h13v1.4h-13zM1169 149h18v1.4h-18zM1188 149h6v1.4h-6zM1150 151h11v1.4h-11zM1146 159h14v1.4h-14zM1167 159h9v1.4h-9zM1177 159h18v1.4h-18zM1159 163h8v1.4h-8zM1168 163h14v1.4h-14zM1187 163h8v1.4h-8zM1146 171h15v1.4h-15zM1176 171h19v1.4h-19zM1155 173h8v1.4h-8zM1164 173h15v1.4h-15zM1146 179h7v1.4h-7zM1155 181h13v1.4h-13zM1169 181h5v1.4h-5zM1169 183h7v1.4h-7zM1151 191h11v1.4h-11zM1163 191h6v1.4h-6zM1171 191h1v1.4h-1zM1177 191h10v1.4h-10zM1188 191h7v1.4h-7zM1160 197h1v1.4h-1zM1162 197h8v1.4h-8zM1171 197h3v1.4h-3zM1193 197h1v1.4h-1zM1151 205h16v1.4h-16zM1168 205h6v1.4h-6zM1176 205h1v1.4h-1zM1182 205h13v1.4h-13zM1193 211h1v1.4h-1zM1151 219h22v1.4h-22zM1174 219h6v1.4h-6zM1182 219h1v1.4h-1zM1188 219h7v1.4h-7zM1193 225h1v1.4h-1zM1154 235h24v1.4h-24zM1146 237h7v1.4h-7zM1146 239h6v1.4h-6zM1159 245h24v1.4h-24zM1184 245h1v1.4h-1zM1164 247h1v1.4h-1zM1163 249h24v1.4h-24zM1151 255h24v1.4h-24zM1176 255h6v1.4h-6zM1184 255h1v1.4h-1zM1193 255h2v1.4h-2zM1160 257h18v1.4h-18zM1179 257h6v1.4h-6zM1187 257h1v1.4h-1zM1183 259h6v1.4h-6zM1190 259h4v1.4h-4zM1157 261h6v1.4h-6zM1164 261h6v1.4h-6zM1188 261h7v1.4h-7zM1148 273h32v1.4h-32zM1181 273h6v1.4h-6zM1189 273h1v1.4h-1zM1171 277h16v1.4h-16zM1188 277h1v1.4h-1zM1146 281h10v1.4h-10zM1166 281h18v1.4h-18zM1185 281h6v1.4h-6zM1193 281h1v1.4h-1zM1162 283h3v1.4h-3zM1166 283h10v1.4h-10zM1146 289h12v1.4h-12zM1170 289h18v1.4h-18zM1189 289h6v1.4h-6zM1166 293h3v1.4h-3zM1170 293h12v1.4h-12zM1183 293h8v1.4h-8zM1192 293h3v1.4h-3zM1146 305h11v1.4h-11zM1164 305h16v1.4h-16zM1159 309h3v1.4h-3zM1163 309h11v1.4h-11zM1146 317h10v1.4h-10zM1163 317h16v1.4h-16zM1162 319h3v1.4h-3zM1166 319h10v1.4h-10zM1146 325h4v1.4h-4zM1157 325h16v1.4h-16zM1190 325h5v1.4h-5zM1155 327h3v1.4h-3zM1159 327h4v1.4h-4zM1151 335h19v1.4h-19zM1171 335h6v1.4h-6zM1179 335h1v1.4h-1zM1182 335h11v1.4h-11zM1154 345h5v1.4h-5zM1191 347h4v1.4h-4zM1174 353h21v1.4h-21zM1154 357h28v1.4h-28zM1154 363h27v1.4h-27zM1154 373h12v1.4h-12zM1154 383h6v1.4h-6zM1181 385h6v1.4h-6zM1154 393h26v1.4h-26zM1151 409h13v1.4h-13zM1165 409h6v1.4h-6zM1173 409h1v1.4h-1zM1182 409h13v1.4h-13zM1162 417h16v1.4h-16zM1179 417h9v1.4h-9zM1189 417h6v1.4h-6zM1179 427h8v1.4h-8zM1188 427h3v1.4h-3zM1192 427h3v1.4h-3zM1159 439h27v1.4h-27zM1159 443h21v1.4h-21zM1181 443h1v1.4h-1zM1184 443h11v1.4h-11zM1165 445h17v1.4h-17zM1183 445h1v1.4h-1zM1155 447h11v1.4h-11zM1167 447h1v1.4h-1zM1159 455h23v1.4h-23zM1152 467h30v1.4h-30zM1183 467h6v1.4h-6zM1191 467h1v1.4h-1zM1166 469h23v1.4h-23zM1166 471h18v1.4h-18zM1185 471h6v1.4h-6zM1193 471h1v1.4h-1zM1162 473h18v1.4h-18zM1181 473h6v1.4h-6zM1189 473h1v1.4h-1zM1155 479h13v1.4h-13zM1169 479h6v1.4h-6zM1177 479h1v1.4h-1zM1180 479h11v1.4h-11zM1169 483h10v1.4h-10zM1180 483h15v1.4h-15zM1169 485h18v1.4h-18zM1188 485h6v1.4h-6zM1175 487h3v1.4h-3zM1186 487h1v1.4h-1zM1189 487h6v1.4h-6zM1172 489h11v1.4h-11zM1184 489h1v1.4h-1zM1192 493h3v1.4h-3zM1185 495h3v1.4h-3zM1189 495h6v1.4h-6zM1182 499h13v1.4h-13zM1182 505h7v1.4h-7zM1178 511h11v1.4h-11zM1150 515h11v1.4h-11zM1165 515h5v1.4h-5zM1150 519h16v1.4h-16zM1170 519h5v1.4h-5zM1176 519h10v1.4h-10zM1187 519h1v1.4h-1zM1150 521h20v1.4h-20zM1174 521h5v1.4h-5zM1180 521h10v1.4h-10zM1191 521h1v1.4h-1zM1150 523h9v1.4h-9zM1163 523h5v1.4h-5zM1169 523h10v1.4h-10zM1180 523h1v1.4h-1zM1193 523h2v1.4h-2zM1150 527h12v1.4h-12zM1166 527h5v1.4h-5zM1172 527h15v1.4h-15zM1188 527h1v1.4h-1zM1150 529h15v1.4h-15zM1169 529h5v1.4h-5zM1175 529h15v1.4h-15zM1191 529h1v1.4h-1zM1150 531h13v1.4h-13zM1167 531h5v1.4h-5zM1173 531h21v1.4h-21zM1150 533h10v1.4h-10zM1164 533h5v1.4h-5zM1150 535h9v1.4h-9zM1163 535h5v1.4h-5zM1150 539h12v1.4h-12zM1150 541h17v1.4h-17zM1150 545h12v1.4h-12zM1166 545h5v1.4h-5zM1161 551h11v1.4h-11zM1160 553h20v1.4h-20zM1181 553h1v1.4h-1zM1161 555h13v1.4h-13zM1175 555h1v1.4h-1zM1178 555h11v1.4h-11zM1170 557h16v1.4h-16zM1187 557h6v1.4h-6zM1159 559h21v1.4h-21zM1181 559h1v1.4h-1zM1184 559h11v1.4h-11zM1181 571h14v1.4h-14zM1178 573h9v1.4h-9zM1188 573h3v1.4h-3zM1176 575h19v1.4h-19zM1166 579h10v1.4h-10zM1161 591h22v1.4h-22zM1184 591h11v1.4h-11zM1155 619h5v1.4h-5zM1161 619h3v1.4h-3zM1155 623h4v1.4h-4zM1160 623h24v1.4h-24zM1146 629h13v1.4h-13zM1169 629h26v1.4h-26zM1155 631h4v1.4h-4zM1160 631h13v1.4h-13zM1146 641h14v1.4h-14zM1164 641h11v1.4h-11zM1162 643h4v1.4h-4zM1167 643h14v1.4h-14zM1150 649h13v1.4h-13zM1150 657h24v1.4h-24zM1178 657h5v1.4h-5zM1150 665h9v1.4h-9zM1150 673h9v1.4h-9zM1150 681h10v1.4h-10zM1150 689h12v1.4h-12zM1146 697h8v1.4h-8zM1155 699h4v1.4h-4zM1160 699h8v1.4h-8zM1146 705h6v1.4h-6zM1155 707h4v1.4h-4zM1160 707h6v1.4h-6zM1146 713h5v1.4h-5zM1160 713h11v1.4h-11zM1155 715h4v1.4h-4zM1160 715h5v1.4h-5zM1146 725h8v1.4h-8zM1158 725h6v1.4h-6zM1178 727h6v1.4h-6zM1152 733h8v1.4h-8zM1168 733h6v1.4h-6zM1188 733h7v1.4h-7zM1155 735h15v1.4h-15zM1171 735h7v1.4h-7zM1190 735h5v1.4h-5zM1155 737h15v1.4h-15zM1171 737h5v1.4h-5zM1161 749h20v1.4h-20zM1159 755h4v1.4h-4zM1164 755h8v1.4h-8zM1159 757h4v1.4h-4zM1164 757h12v1.4h-12zM1152 765h14v1.4h-14zM1176 765h6v1.4h-6zM1185 765h1v1.4h-1zM1164 769h5v1.4h-5zM1174 775h21v1.4h-21zM1165 777h22v1.4h-22zM1188 777h3v1.4h-3zM1160 779h5v1.4h-5zM1166 779h9v1.4h-9zM1161 785h20v1.4h-20zM1187 785h8v1.4h-8zM1146 791h6v1.4h-6zM1162 791h6v1.4h-6zM1171 791h1v1.4h-1zM1155 793h4v1.4h-4zM1160 793h6v1.4h-6zM1172 793h11v1.4h-11zM1146 803h8v1.4h-8zM1165 803h1v1.4h-1zM1168 805h11v1.4h-11zM1155 807h4v1.4h-4zM1160 807h8v1.4h-8zM1146 813h11v1.4h-11zM1167 813h1v1.4h-1zM1168 815h11v1.4h-11zM1155 817h4v1.4h-4zM1160 817h11v1.4h-11zM1146 827h7v1.4h-7zM1163 827h6v1.4h-6zM1172 827h1v1.4h-1zM1172 829h11v1.4h-11zM1168 831h4v1.4h-4zM1173 831h7v1.4h-7zM1161 833h24v1.4h-24zM1186 833h6v1.4h-6zM1194 833h1v1.4h-1zM1146 839h8v1.4h-8zM1164 839h1v1.4h-1zM1172 841h11v1.4h-11zM1162 843h4v1.4h-4zM1167 843h8v1.4h-8z"/><path fill="#24292e" fill-opacity="0.46" d="M1157 85h1v1.4h-1zM1158 85h1v1.4h-1zM1163 85h1v1.4h-1zM1177 85h4v1.4h-4zM1182 85h7v1.4h-7zM1190 85h1v1.4h-1zM1191 85h4v1.4h-4zM1158 87h1v1.4h-1zM1159 87h1v1.4h-1zM1171 87h1v1.4h-1zM1173 87h1v1.4h-1zM1186 87h1v1.4h-1zM1187 87h1v1.4h-1zM1188 87h1v1.4h-1zM1190 87h1v1.4h-1zM1155 89h1v1.4h-1zM1156 89h1v1.4h-1zM1166 89h1v1.4h-1zM1180 89h4v1.4h-4zM1185 89h5v1.4h-5zM1190 89h1v1.4h-1zM1192 89h1v1.4h-1zM1170 91h1v1.4h-1zM1171 91h1v1.4h-1zM1181 91h1v1.4h-1zM1167 93h1v1.4h-1zM1168 93h1v1.4h-1zM1178 93h1v1.4h-1zM1192 93h3v1.4h-3zM1161 95h1v1.4h-1zM1162 95h1v1.4h-1zM1173 95h1v1.4h-1zM1187 95h4v1.4h-4zM1192 95h3v1.4h-3zM1157 99h1v1.4h-1zM1166 99h4v1.4h-4zM1181 99h1v1.4h-1zM1142 101h1v1.4h-1zM1164 105h1v1.4h-1zM1171 105h1v1.4h-1zM1174 105h1v1.4h-1zM1187 105h1v1.4h-1zM1155 109h10v1.4h-10zM1173 109h1v1.4h-1zM1154 111h13v1.4h-13zM1177 111h1v1.4h-1zM1154 113h11v1.4h-11zM1178 113h1v1.4h-1zM1179 113h1v1.4h-1zM1183 113h1v1.4h-1zM1184 113h1v1.4h-1zM1185 113h1v1.4h-1zM1157 117h1v1.4h-1zM1158 119h8v1.4h-8zM1181 119h1v1.4h-1zM1183 119h1v1.4h-1zM1159 121h23v1.4h-23zM1189 121h1v1.4h-1zM1146 123h1v1.4h-1zM1148 123h1v1.4h-1zM1155 125h10v1.4h-10zM1168 125h8v1.4h-8zM1177 125h10v1.4h-10zM1187 125h1v1.4h-1zM1146 127h1v1.4h-1zM1160 131h1v1.4h-1zM1161 131h9v1.4h-9zM1183 131h1v1.4h-1zM1156 133h12v1.4h-12zM1157 135h1v1.4h-1zM1159 135h12v1.4h-12zM1172 135h1v1.4h-1zM1173 135h1v1.4h-1zM1146 137h1v1.4h-1zM1159 141h1v1.4h-1zM1160 141h4v1.4h-4zM1175 141h1v1.4h-1zM1194 141h1v1.4h-1zM1177 143h1v1.4h-1zM1146 145h1v1.4h-1zM1159 149h1v1.4h-1zM1160 149h7v1.4h-7zM1187 149h1v1.4h-1zM1194 149h1v1.4h-1zM1161 151h1v1.4h-1zM1162 151h14v1.4h-14zM1176 151h1v1.4h-1zM1187 151h1v1.4h-1zM1189 151h6v1.4h-6zM1162 153h1v1.4h-1zM1146 155h1v1.4h-1zM1160 159h1v1.4h-1zM1161 159h4v1.4h-4zM1176 159h1v1.4h-1zM1153 161h1v1.4h-1zM1159 161h8v1.4h-8zM1168 161h14v1.4h-14zM1182 161h1v1.4h-1zM1184 161h1v1.4h-1zM1182 163h1v1.4h-1zM1150 165h1v1.4h-1zM1146 167h1v1.4h-1zM1161 171h1v1.4h-1zM1162 171h12v1.4h-12zM1179 173h1v1.4h-1zM1180 173h12v1.4h-12zM1193 173h2v1.4h-2zM1146 175h1v1.4h-1zM1153 179h1v1.4h-1zM1154 179h1v1.4h-1zM1162 179h1v1.4h-1zM1174 181h1v1.4h-1zM1175 181h1v1.4h-1zM1176 181h1v1.4h-1zM1155 183h11v1.4h-11zM1176 183h1v1.4h-1zM1182 183h11v1.4h-11zM1193 183h1v1.4h-1zM1194 183h1v1.4h-1zM1146 185h1v1.4h-1zM1142 187h1v1.4h-1zM1162 191h1v1.4h-1zM1169 191h1v1.4h-1zM1172 191h1v1.4h-1zM1173 191h1v1.4h-1zM1174 191h1v1.4h-1zM1187 191h1v1.4h-1zM1153 193h1v1.4h-1zM1150 195h12v1.4h-12zM1164 195h1v1.4h-1zM1166 195h12v1.4h-12zM1178 195h1v1.4h-1zM1150 197h8v1.4h-8zM1174 197h1v1.4h-1zM1175 197h1v1.4h-1zM1180 197h1v1.4h-1zM1182 197h7v1.4h-7zM1194 197h1v1.4h-1zM1146 199h1v1.4h-1zM1147 199h1v1.4h-1zM1142 201h1v1.4h-1zM1167 205h1v1.4h-1zM1174 205h1v1.4h-1zM1177 205h1v1.4h-1zM1178 205h1v1.4h-1zM1179 205h1v1.4h-1zM1153 207h1v1.4h-1zM1150 209h12v1.4h-12zM1164 209h1v1.4h-1zM1166 209h12v1.4h-12zM1178 209h1v1.4h-1zM1150 211h7v1.4h-7zM1159 211h1v1.4h-1zM1161 211h7v1.4h-7zM1172 211h1v1.4h-1zM1174 211h7v1.4h-7zM1182 211h7v1.4h-7zM1146 213h1v1.4h-1zM1147 213h1v1.4h-1zM1142 215h1v1.4h-1zM1173 219h1v1.4h-1zM1180 219h1v1.4h-1zM1183 219h1v1.4h-1zM1184 219h1v1.4h-1zM1185 219h1v1.4h-1zM1153 221h1v1.4h-1zM1150 223h12v1.4h-12zM1164 223h1v1.4h-1zM1166 223h12v1.4h-12zM1178 223h1v1.4h-1zM1150 225h7v1.4h-7zM1159 225h1v1.4h-1zM1161 225h7v1.4h-7zM1172 225h1v1.4h-1zM1174 225h7v1.4h-7zM1182 225h7v1.4h-7zM1194 225h1v1.4h-1zM1150 227h6v1.4h-6zM1158 227h1v1.4h-1zM1160 227h6v1.4h-6zM1146 229h1v1.4h-1zM1147 229h1v1.4h-1zM1142 231h1v1.4h-1zM1179 235h1v1.4h-1zM1153 237h1v1.4h-1zM1142 241h1v1.4h-1zM1183 245h1v1.4h-1zM1185 245h1v1.4h-1zM1187 245h1v1.4h-1zM1155 247h7v1.4h-7zM1172 247h1v1.4h-1zM1155 249h6v1.4h-6zM1187 249h1v1.4h-1zM1142 251h1v1.4h-1zM1175 255h1v1.4h-1zM1182 255h1v1.4h-1zM1185 255h1v1.4h-1zM1186 255h1v1.4h-1zM1187 255h4v1.4h-4zM1152 257h6v1.4h-6zM1178 257h1v1.4h-1zM1185 257h1v1.4h-1zM1188 257h1v1.4h-1zM1189 257h1v1.4h-1zM1190 257h1v1.4h-1zM1194 257h1v1.4h-1zM1153 259h1v1.4h-1zM1154 259h5v1.4h-5zM1160 259h8v1.4h-8zM1169 259h6v1.4h-6zM1176 259h1v1.4h-1zM1179 259h1v1.4h-1zM1181 259h1v1.4h-1zM1194 259h1v1.4h-1zM1170 261h1v1.4h-1zM1171 261h4v1.4h-4zM1176 261h8v1.4h-8zM1146 263h1v1.4h-1zM1153 267h6v1.4h-6zM1159 267h1v1.4h-1zM1142 269h1v1.4h-1zM1180 273h1v1.4h-1zM1187 273h1v1.4h-1zM1190 273h1v1.4h-1zM1157 277h1v1.4h-1zM1166 277h3v1.4h-3zM1187 277h1v1.4h-1zM1189 277h1v1.4h-1zM1190 277h1v1.4h-1zM1192 277h1v1.4h-1zM1194 277h1v1.4h-1zM1156 281h1v1.4h-1zM1157 281h7v1.4h-7zM1184 281h1v1.4h-1zM1191 281h1v1.4h-1zM1194 281h1v1.4h-1zM1176 283h1v1.4h-1zM1177 283h7v1.4h-7zM1185 283h7v1.4h-7zM1146 285h1v1.4h-1zM1159 289h1v1.4h-1zM1160 289h8v1.4h-8zM1188 289h1v1.4h-1zM1153 291h1v1.4h-1zM1159 291h3v1.4h-3zM1163 291h12v1.4h-12zM1175 291h1v1.4h-1zM1177 291h1v1.4h-1zM1182 293h1v1.4h-1zM1150 295h1v1.4h-1zM1166 299h1v1.4h-1zM1146 301h1v1.4h-1zM1157 305h1v1.4h-1zM1158 305h4v1.4h-4zM1180 305h1v1.4h-1zM1182 305h13v1.4h-13zM1153 307h1v1.4h-1zM1159 307h3v1.4h-3zM1163 307h11v1.4h-11zM1174 307h1v1.4h-1zM1176 307h1v1.4h-1zM1174 309h1v1.4h-1zM1175 309h4v1.4h-4zM1179 309h1v1.4h-1zM1181 309h13v1.4h-13zM1194 309h1v1.4h-1zM1150 311h1v1.4h-1zM1146 313h1v1.4h-1zM1156 317h1v1.4h-1zM1157 317h4v1.4h-4zM1179 317h1v1.4h-1zM1181 317h13v1.4h-13zM1176 319h1v1.4h-1zM1177 319h4v1.4h-4zM1181 319h1v1.4h-1zM1183 319h12v1.4h-12zM1146 321h1v1.4h-1zM1150 325h1v1.4h-1zM1151 325h4v1.4h-4zM1173 325h1v1.4h-1zM1175 325h13v1.4h-13zM1163 327h1v1.4h-1zM1164 327h4v1.4h-4zM1168 327h1v1.4h-1zM1170 327h13v1.4h-13zM1187 327h8v1.4h-8zM1146 329h1v1.4h-1zM1142 331h1v1.4h-1zM1170 335h1v1.4h-1zM1177 335h1v1.4h-1zM1180 335h1v1.4h-1zM1193 335h1v1.4h-1zM1194 335h1v1.4h-1zM1153 337h7v1.4h-7zM1164 337h1v1.4h-1zM1153 339h7v1.4h-7zM1160 339h1v1.4h-1zM1150 341h17v1.4h-17zM1173 341h1v1.4h-1zM1150 343h16v1.4h-16zM1168 343h7v1.4h-7zM1176 343h16v1.4h-16zM1159 345h1v1.4h-1zM1160 345h2v1.4h-2zM1162 345h1v1.4h-1zM1164 345h1v1.4h-1zM1165 347h7v1.4h-7zM1173 347h16v1.4h-16zM1190 347h1v1.4h-1zM1154 349h1v1.4h-1zM1150 351h1v1.4h-1zM1151 351h1v1.4h-1zM1150 353h3v1.4h-3zM1155 353h7v1.4h-7zM1163 353h3v1.4h-3zM1150 355h27v1.4h-27zM1179 355h7v1.4h-7zM1187 355h8v1.4h-8zM1182 357h1v1.4h-1zM1183 357h1v1.4h-1zM1184 357h1v1.4h-1zM1186 357h1v1.4h-1zM1165 359h7v1.4h-7zM1173 359h22v1.4h-22zM1154 361h1v1.4h-1zM1155 361h1v1.4h-1zM1181 363h1v1.4h-1zM1182 363h1v1.4h-1zM1183 363h1v1.4h-1zM1185 363h1v1.4h-1zM1165 365h7v1.4h-7zM1173 365h22v1.4h-22zM1154 367h1v1.4h-1zM1150 369h1v1.4h-1zM1151 369h1v1.4h-1zM1150 371h21v1.4h-21zM1173 371h7v1.4h-7zM1181 371h14v1.4h-14zM1166 373h1v1.4h-1zM1167 373h1v1.4h-1zM1168 373h1v1.4h-1zM1170 373h1v1.4h-1zM1165 375h7v1.4h-7zM1173 375h21v1.4h-21zM1154 377h1v1.4h-1zM1150 379h1v1.4h-1zM1151 379h1v1.4h-1zM1150 381h6v1.4h-6zM1158 381h7v1.4h-7zM1166 381h6v1.4h-6zM1176 381h1v1.4h-1zM1160 383h1v1.4h-1zM1161 383h1v1.4h-1zM1162 383h1v1.4h-1zM1164 383h16v1.4h-16zM1180 383h1v1.4h-1zM1182 383h1v1.4h-1zM1165 385h7v1.4h-7zM1173 385h6v1.4h-6zM1180 385h1v1.4h-1zM1187 385h1v1.4h-1zM1188 385h1v1.4h-1zM1190 385h5v1.4h-5zM1154 387h1v1.4h-1zM1150 389h1v1.4h-1zM1151 389h1v1.4h-1zM1150 391h31v1.4h-31zM1183 391h7v1.4h-7zM1191 391h4v1.4h-4zM1180 393h1v1.4h-1zM1181 393h1v1.4h-1zM1182 393h1v1.4h-1zM1184 393h1v1.4h-1zM1165 395h7v1.4h-7zM1173 395h22v1.4h-22zM1154 397h1v1.4h-1zM1150 399h1v1.4h-1zM1151 399h1v1.4h-1zM1150 401h6v1.4h-6zM1146 403h1v1.4h-1zM1147 403h1v1.4h-1zM1142 405h1v1.4h-1zM1164 409h1v1.4h-1zM1171 409h1v1.4h-1zM1174 409h1v1.4h-1zM1175 409h1v1.4h-1zM1176 409h4v1.4h-4zM1150 411h9v1.4h-9zM1180 411h1v1.4h-1zM1149 415h1v1.4h-1zM1150 415h16v1.4h-16zM1170 415h4v1.4h-4zM1175 415h2v1.4h-2zM1177 415h1v1.4h-1zM1179 415h1v1.4h-1zM1150 417h9v1.4h-9zM1146 419h1v1.4h-1zM1153 423h1v1.4h-1zM1150 425h7v1.4h-7zM1159 425h4v1.4h-4zM1163 425h1v1.4h-1zM1150 427h8v1.4h-8zM1160 427h4v1.4h-4zM1165 427h11v1.4h-11zM1191 427h1v1.4h-1zM1150 429h11v1.4h-11zM1163 429h4v1.4h-4zM1168 429h11v1.4h-11zM1179 429h1v1.4h-1zM1150 431h9v1.4h-9zM1146 433h1v1.4h-1zM1147 433h1v1.4h-1zM1142 435h1v1.4h-1zM1180 443h1v1.4h-1zM1182 443h1v1.4h-1zM1146 445h16v1.4h-16zM1182 445h1v1.4h-1zM1184 445h1v1.4h-1zM1185 445h1v1.4h-1zM1146 447h6v1.4h-6zM1166 447h1v1.4h-1zM1168 447h1v1.4h-1zM1169 447h1v1.4h-1zM1146 449h24v1.4h-24zM1180 449h1v1.4h-1zM1142 451h1v1.4h-1zM1183 455h1v1.4h-1zM1155 457h5v1.4h-5zM1168 457h1v1.4h-1zM1169 457h1v1.4h-1zM1170 457h1v1.4h-1zM1155 459h9v1.4h-9zM1172 459h1v1.4h-1zM1173 459h1v1.4h-1zM1174 459h1v1.4h-1zM1155 461h8v1.4h-8zM1171 461h1v1.4h-1zM1172 461h1v1.4h-1zM1173 461h1v1.4h-1zM1142 463h1v1.4h-1zM1182 467h1v1.4h-1zM1189 467h1v1.4h-1zM1192 467h1v1.4h-1zM1194 467h1v1.4h-1zM1155 469h9v1.4h-9zM1189 469h1v1.4h-1zM1155 471h9v1.4h-9zM1184 471h1v1.4h-1zM1191 471h1v1.4h-1zM1194 471h1v1.4h-1zM1155 473h5v1.4h-5zM1180 473h1v1.4h-1zM1187 473h1v1.4h-1zM1190 473h1v1.4h-1zM1191 473h1v1.4h-1zM1192 473h1v1.4h-1zM1193 473h1v1.4h-1zM1142 475h1v1.4h-1zM1168 479h1v1.4h-1zM1175 479h1v1.4h-1zM1178 479h1v1.4h-1zM1163 483h4v1.4h-4zM1179 483h1v1.4h-1zM1163 485h4v1.4h-4zM1187 485h1v1.4h-1zM1194 485h1v1.4h-1zM1163 487h5v1.4h-5zM1178 487h1v1.4h-1zM1187 487h1v1.4h-1zM1163 489h6v1.4h-6zM1183 489h1v1.4h-1zM1185 489h1v1.4h-1zM1186 489h1v1.4h-1zM1163 493h22v1.4h-22zM1163 495h15v1.4h-15zM1188 495h1v1.4h-1zM1163 499h16v1.4h-16zM1163 501h24v1.4h-24zM1163 505h12v1.4h-12zM1189 505h1v1.4h-1zM1194 505h1v1.4h-1zM1163 507h25v1.4h-25zM1165 511h11v1.4h-11zM1189 511h1v1.4h-1zM1190 511h1v1.4h-1zM1194 511h1v1.4h-1zM1161 515h1v1.4h-1zM1162 515h1v1.4h-1zM1170 515h1v1.4h-1zM1175 515h1v1.4h-1zM1177 515h1v1.4h-1zM1191 515h4v1.4h-4zM1166 519h1v1.4h-1zM1167 519h1v1.4h-1zM1175 519h1v1.4h-1zM1186 519h1v1.4h-1zM1188 519h1v1.4h-1zM1189 519h1v1.4h-1zM1191 519h1v1.4h-1zM1170 521h1v1.4h-1zM1171 521h1v1.4h-1zM1179 521h1v1.4h-1zM1190 521h1v1.4h-1zM1192 521h1v1.4h-1zM1193 521h1v1.4h-1zM1159 523h1v1.4h-1zM1160 523h1v1.4h-1zM1168 523h1v1.4h-1zM1179 523h1v1.4h-1zM1181 523h1v1.4h-1zM1182 523h1v1.4h-1zM1184 523h1v1.4h-1zM1162 527h1v1.4h-1zM1163 527h1v1.4h-1zM1171 527h1v1.4h-1zM1187 527h1v1.4h-1zM1189 527h1v1.4h-1zM1190 527h1v1.4h-1zM1192 527h1v1.4h-1zM1165 529h1v1.4h-1zM1166 529h1v1.4h-1zM1174 529h1v1.4h-1zM1190 529h1v1.4h-1zM1192 529h1v1.4h-1zM1193 529h1v1.4h-1zM1163 531h1v1.4h-1zM1164 531h1v1.4h-1zM1172 531h1v1.4h-1zM1194 531h1v1.4h-1zM1160 533h1v1.4h-1zM1161 533h1v1.4h-1zM1169 533h1v1.4h-1zM1174 533h1v1.4h-1zM1176 533h1v1.4h-1zM1190 533h4v1.4h-4zM1159 535h1v1.4h-1zM1160 535h1v1.4h-1zM1168 535h1v1.4h-1zM1173 535h1v1.4h-1zM1175 535h1v1.4h-1zM1189 535h4v1.4h-4zM1194 535h1v1.4h-1zM1162 539h1v1.4h-1zM1163 539h1v1.4h-1zM1174 539h1v1.4h-1zM1188 539h4v1.4h-4zM1193 539h2v1.4h-2zM1167 541h1v1.4h-1zM1168 541h1v1.4h-1zM1179 541h1v1.4h-1zM1193 541h2v1.4h-2zM1162 545h1v1.4h-1zM1163 545h1v1.4h-1zM1171 545h1v1.4h-1zM1176 545h1v1.4h-1zM1178 545h1v1.4h-1zM1192 545h3v1.4h-3zM1157 549h1v1.4h-1zM1150 551h9v1.4h-9zM1172 551h1v1.4h-1zM1150 553h8v1.4h-8zM1180 553h1v1.4h-1zM1182 553h1v1.4h-1zM1183 553h1v1.4h-1zM1150 555h9v1.4h-9zM1174 555h1v1.4h-1zM1176 555h1v1.4h-1zM1189 555h1v1.4h-1zM1194 555h1v1.4h-1zM1158 557h10v1.4h-10zM1186 557h1v1.4h-1zM1193 557h1v1.4h-1zM1150 559h7v1.4h-7zM1180 559h1v1.4h-1zM1182 559h1v1.4h-1zM1146 561h1v1.4h-1zM1148 561h1v1.4h-1zM1155 563h16v1.4h-16zM1174 563h7v1.4h-7zM1182 563h13v1.4h-13zM1155 565h24v1.4h-24zM1189 565h6v1.4h-6zM1155 567h6v1.4h-6zM1164 567h7v1.4h-7zM1172 567h6v1.4h-6zM1178 567h1v1.4h-1zM1156 571h18v1.4h-18zM1156 573h19v1.4h-19zM1191 573h1v1.4h-1zM1192 573h1v1.4h-1zM1156 575h17v1.4h-17zM1155 579h4v1.4h-4zM1176 579h1v1.4h-1zM1177 579h9v1.4h-9zM1186 579h1v1.4h-1zM1188 579h7v1.4h-7zM1155 583h4v1.4h-4zM1162 583h1v1.4h-1zM1154 585h7v1.4h-7zM1173 585h1v1.4h-1zM1154 587h6v1.4h-6zM1166 587h1v1.4h-1zM1154 589h8v1.4h-8zM1164 589h1v1.4h-1zM1165 589h1v1.4h-1zM1166 589h1v1.4h-1zM1154 591h5v1.4h-5zM1154 593h11v1.4h-11zM1171 593h1v1.4h-1zM1154 595h12v1.4h-12zM1173 595h1v1.4h-1zM1154 597h8v1.4h-8zM1169 597h1v1.4h-1zM1154 599h4v1.4h-4zM1150 601h1v1.4h-1zM1151 601h1v1.4h-1zM1153 605h1v1.4h-1zM1159 605h16v1.4h-16zM1175 605h1v1.4h-1zM1177 605h1v1.4h-1zM1159 607h4v1.4h-4zM1166 607h1v1.4h-1zM1166 609h4v1.4h-4zM1170 609h1v1.4h-1zM1158 611h2v1.4h-2zM1154 613h1v1.4h-1zM1155 613h1v1.4h-1zM1150 615h1v1.4h-1zM1164 619h1v1.4h-1zM1169 619h1v1.4h-1zM1176 619h4v1.4h-4zM1180 619h1v1.4h-1zM1181 619h1v1.4h-1zM1184 623h1v1.4h-1zM1190 623h5v1.4h-5zM1146 625h1v1.4h-1zM1159 629h1v1.4h-1zM1160 629h7v1.4h-7zM1173 631h1v1.4h-1zM1174 631h7v1.4h-7zM1181 631h1v1.4h-1zM1182 631h1v1.4h-1zM1146 633h1v1.4h-1zM1160 641h1v1.4h-1zM1161 641h1v1.4h-1zM1176 641h1v1.4h-1zM1181 643h1v1.4h-1zM1182 643h1v1.4h-1zM1183 643h1v1.4h-1zM1146 645h1v1.4h-1zM1163 649h1v1.4h-1zM1164 649h1v1.4h-1zM1174 649h1v1.4h-1zM1162 651h4v1.4h-4zM1167 651h13v1.4h-13zM1180 651h1v1.4h-1zM1146 653h1v1.4h-1zM1174 657h1v1.4h-1zM1175 657h1v1.4h-1zM1183 657h1v1.4h-1zM1190 657h1v1.4h-1zM1192 657h1v1.4h-1zM1162 659h4v1.4h-4zM1167 659h24v1.4h-24zM1191 659h1v1.4h-1zM1146 661h1v1.4h-1zM1159 665h1v1.4h-1zM1160 665h1v1.4h-1zM1170 665h1v1.4h-1zM1162 667h4v1.4h-4zM1167 667h9v1.4h-9zM1176 667h1v1.4h-1zM1146 669h1v1.4h-1zM1159 673h1v1.4h-1zM1160 673h9v1.4h-9zM1177 673h1v1.4h-1zM1179 673h1v1.4h-1zM1155 675h4v1.4h-4zM1160 675h9v1.4h-9zM1172 675h9v1.4h-9zM1181 675h1v1.4h-1zM1146 677h1v1.4h-1zM1160 681h1v1.4h-1zM1161 681h1v1.4h-1zM1171 681h1v1.4h-1zM1162 683h4v1.4h-4zM1167 683h10v1.4h-10zM1177 683h1v1.4h-1zM1146 685h1v1.4h-1zM1162 689h1v1.4h-1zM1163 689h1v1.4h-1zM1173 689h1v1.4h-1zM1162 691h4v1.4h-4zM1167 691h12v1.4h-12zM1179 691h1v1.4h-1zM1146 693h1v1.4h-1zM1154 697h1v1.4h-1zM1155 697h1v1.4h-1zM1163 697h1v1.4h-1zM1168 699h1v1.4h-1zM1169 699h1v1.4h-1zM1170 699h1v1.4h-1zM1146 701h1v1.4h-1zM1152 705h1v1.4h-1zM1153 705h6v1.4h-6zM1168 705h1v1.4h-1zM1170 705h5v1.4h-5zM1184 705h1v1.4h-1zM1192 705h1v1.4h-1zM1166 707h1v1.4h-1zM1167 707h6v1.4h-6zM1173 707h1v1.4h-1zM1175 707h5v1.4h-5zM1180 707h1v1.4h-1zM1181 707h1v1.4h-1zM1146 709h1v1.4h-1zM1151 713h1v1.4h-1zM1152 713h6v1.4h-6zM1171 713h1v1.4h-1zM1179 713h1v1.4h-1zM1165 715h1v1.4h-1zM1166 715h6v1.4h-6zM1172 715h1v1.4h-1zM1173 715h1v1.4h-1zM1146 717h1v1.4h-1zM1154 725h1v1.4h-1zM1155 725h1v1.4h-1zM1177 725h1v1.4h-1zM1162 727h4v1.4h-4zM1167 727h7v1.4h-7zM1184 727h1v1.4h-1zM1146 729h1v1.4h-1zM1160 733h1v1.4h-1zM1161 733h5v1.4h-5zM1174 733h1v1.4h-1zM1176 733h9v1.4h-9zM1178 735h1v1.4h-1zM1179 735h7v1.4h-7zM1176 737h1v1.4h-1zM1177 737h1v1.4h-1zM1178 737h1v1.4h-1zM1155 741h4v1.4h-4zM1160 741h7v1.4h-7zM1170 741h5v1.4h-5zM1176 741h1v1.4h-1zM1156 745h16v1.4h-16zM1175 745h9v1.4h-9zM1188 745h1v1.4h-1zM1190 745h5v1.4h-5zM1181 749h1v1.4h-1zM1187 749h4v1.4h-4zM1191 749h1v1.4h-1zM1153 753h1v1.4h-1zM1154 753h16v1.4h-16zM1170 753h1v1.4h-1zM1172 753h1v1.4h-1zM1172 755h1v1.4h-1zM1173 755h16v1.4h-16zM1190 755h5v1.4h-5zM1176 757h1v1.4h-1zM1177 757h16v1.4h-16zM1194 757h1v1.4h-1zM1150 759h1v1.4h-1zM1146 761h1v1.4h-1zM1166 765h1v1.4h-1zM1167 765h7v1.4h-7zM1194 765h1v1.4h-1zM1153 767h1v1.4h-1zM1166 767h4v1.4h-4zM1171 767h7v1.4h-7zM1194 767h1v1.4h-1zM1169 769h1v1.4h-1zM1190 769h1v1.4h-1zM1191 769h1v1.4h-1zM1150 771h1v1.4h-1zM1153 775h1v1.4h-1zM1159 775h4v1.4h-4zM1164 775h5v1.4h-5zM1191 777h1v1.4h-1zM1175 779h1v1.4h-1zM1181 779h12v1.4h-12zM1194 779h1v1.4h-1zM1150 781h1v1.4h-1zM1181 785h1v1.4h-1zM1146 787h1v1.4h-1zM1152 791h1v1.4h-1zM1153 791h7v1.4h-7zM1180 791h4v1.4h-4zM1185 791h7v1.4h-7zM1192 791h1v1.4h-1zM1194 791h1v1.4h-1zM1166 793h1v1.4h-1zM1183 793h1v1.4h-1zM1184 793h7v1.4h-7zM1191 793h1v1.4h-1zM1192 793h1v1.4h-1zM1194 793h1v1.4h-1zM1146 795h1v1.4h-1zM1154 803h1v1.4h-1zM1155 803h7v1.4h-7zM1166 803h1v1.4h-1zM1174 803h1v1.4h-1zM1156 805h4v1.4h-4zM1179 805h1v1.4h-1zM1180 805h7v1.4h-7zM1187 805h1v1.4h-1zM1188 805h1v1.4h-1zM1168 807h1v1.4h-1zM1169 807h4v1.4h-4zM1173 807h1v1.4h-1zM1174 807h1v1.4h-1zM1146 809h1v1.4h-1zM1157 813h1v1.4h-1zM1158 813h7v1.4h-7zM1168 813h1v1.4h-1zM1176 813h1v1.4h-1zM1156 815h4v1.4h-4zM1179 815h1v1.4h-1zM1180 815h7v1.4h-7zM1187 815h1v1.4h-1zM1188 815h1v1.4h-1zM1171 817h1v1.4h-1zM1172 817h4v1.4h-4zM1176 817h1v1.4h-1zM1177 817h1v1.4h-1zM1146 819h1v1.4h-1zM1153 827h1v1.4h-1zM1154 827h7v1.4h-7zM1181 827h4v1.4h-4zM1186 827h7v1.4h-7zM1193 827h1v1.4h-1zM1156 829h8v1.4h-8zM1183 829h1v1.4h-1zM1184 829h7v1.4h-7zM1191 829h1v1.4h-1zM1192 829h1v1.4h-1zM1156 831h4v1.4h-4zM1180 831h1v1.4h-1zM1181 831h8v1.4h-8zM1185 833h1v1.4h-1zM1192 833h1v1.4h-1zM1146 835h1v1.4h-1zM1154 839h1v1.4h-1zM1155 839h7v1.4h-7zM1165 839h1v1.4h-1zM1167 839h9v1.4h-9zM1193 839h1v1.4h-1zM1156 841h8v1.4h-8zM1183 841h1v1.4h-1zM1184 841h7v1.4h-7zM1191 841h1v1.4h-1zM1192 841h1v1.4h-1zM1175 843h1v1.4h-1zM1176 843h8v1.4h-8zM1194 843h1v1.4h-1zM1146 845h1v1.4h-1z"/><path fill="#005cc5" fill-opacity="0.46" d="M1172 85h4v1.4h-4zM1159 89h6v1.4h-6zM1175 89h4v1.4h-4zM1174 91h6v1.4h-6zM1190 91h4v1.4h-4zM1171 93h6v1.4h-6zM1187 93h4v1.4h-4zM1165 95h7v1.4h-7zM1182 95h4v1.4h-4zM1167 109h6v1.4h-6zM1150 125h4v1.4h-4zM1171 133h4v1.4h-4zM1150 143h4v1.4h-4zM1157 153h5v1.4h-5zM1154 161h4v1.4h-4zM1154 163h4v1.4h-4zM1150 173h4v1.4h-4zM1157 179h4v1.4h-4zM1150 181h4v1.4h-4zM1150 183h4v1.4h-4zM1177 183h4v1.4h-4zM1168 247h4v1.4h-4zM1178 259h1v1.4h-1zM1157 283h4v1.4h-4zM1154 291h4v1.4h-4zM1161 293h4v1.4h-4zM1157 299h9v1.4h-9zM1154 307h4v1.4h-4zM1154 309h4v1.4h-4zM1157 319h4v1.4h-4zM1150 327h4v1.4h-4zM1169 341h4v1.4h-4zM1158 401h9v1.4h-9zM1161 411h7v1.4h-7zM1171 411h9v1.4h-9zM1173 449h7v1.4h-7zM1162 457h6v1.4h-6zM1166 459h6v1.4h-6zM1165 461h6v1.4h-6zM1194 479h1v1.4h-1zM1179 487h4v1.4h-4zM1189 501h6v1.4h-6zM1190 505h4v1.4h-4zM1171 515h4v1.4h-4zM1186 515h4v1.4h-4zM1170 533h4v1.4h-4zM1185 533h4v1.4h-4zM1169 535h4v1.4h-4zM1184 535h4v1.4h-4zM1166 539h7v1.4h-7zM1183 539h4v1.4h-4zM1171 541h7v1.4h-7zM1188 541h4v1.4h-4zM1172 545h4v1.4h-4zM1187 545h4v1.4h-4zM1191 555h3v1.4h-3zM1150 563h4v1.4h-4zM1150 565h4v1.4h-4zM1150 567h4v1.4h-4zM1150 579h4v1.4h-4zM1150 583h4v1.4h-4zM1163 585h9v1.4h-9zM1162 587h4v1.4h-4zM1167 593h4v1.4h-4zM1168 595h5v1.4h-5zM1164 597h5v1.4h-5zM1160 599h5v1.4h-5zM1154 605h4v1.4h-4zM1154 607h4v1.4h-4zM1161 609h4v1.4h-4zM1162 611h4v1.4h-4zM1150 619h4v1.4h-4zM1165 619h4v1.4h-4zM1171 619h4v1.4h-4zM1150 623h4v1.4h-4zM1185 623h4v1.4h-4zM1150 631h4v1.4h-4zM1157 643h4v1.4h-4zM1167 649h6v1.4h-6zM1157 651h4v1.4h-4zM1184 657h6v1.4h-6zM1157 659h4v1.4h-4zM1163 665h6v1.4h-6zM1157 667h4v1.4h-4zM1171 673h6v1.4h-6zM1150 675h4v1.4h-4zM1164 681h6v1.4h-6zM1157 683h4v1.4h-4zM1166 689h6v1.4h-6zM1157 691h4v1.4h-4zM1158 697h4v1.4h-4zM1150 699h4v1.4h-4zM1162 705h6v1.4h-6zM1178 705h6v1.4h-6zM1187 705h4v1.4h-4zM1150 707h4v1.4h-4zM1174 713h4v1.4h-4zM1150 715h4v1.4h-4zM1167 725h9v1.4h-9zM1157 727h4v1.4h-4zM1150 735h4v1.4h-4zM1150 737h4v1.4h-4zM1150 741h4v1.4h-4zM1156 749h4v1.4h-4zM1182 749h4v1.4h-4zM1193 749h2v1.4h-2zM1154 755h4v1.4h-4zM1154 757h4v1.4h-4zM1189 765h4v1.4h-4zM1161 767h4v1.4h-4zM1154 775h4v1.4h-4zM1160 777h4v1.4h-4zM1192 777h3v1.4h-3zM1176 779h4v1.4h-4zM1156 785h4v1.4h-4zM1182 785h4v1.4h-4zM1175 791h4v1.4h-4zM1150 793h4v1.4h-4zM1167 793h4v1.4h-4zM1169 803h4v1.4h-4zM1163 805h4v1.4h-4zM1150 807h4v1.4h-4zM1171 813h4v1.4h-4zM1163 815h4v1.4h-4zM1150 817h4v1.4h-4zM1176 827h4v1.4h-4zM1167 829h4v1.4h-4zM1163 831h4v1.4h-4zM1194 831h1v1.4h-1zM1178 839h7v1.4h-7zM1188 839h5v1.4h-5zM1167 841h4v1.4h-4zM1157 843h4v1.4h-4zM1189 843h4v1.4h-4z"/><path fill="#032f62" fill-opacity="0.46" d="M1178 151h9v1.4h-9zM1183 767h11v1.4h-11zM1170 769h20v1.4h-20z"/><path fill="#6a737d" fill-opacity="0.46" d="M1146 637h9v1.4h-9zM1146 721h8v1.4h-8zM1146 799h7v1.4h-7zM1146 823h7v1.4h-7z"/><rect x="1195.3" y="84" width="1" height="762" fill="#dcdcdc"/><rect x="1196.3" y="84" width="15" height="762" fill="#f7f7f7"/><rect x="1196.3" y="175" width="15" height="2" fill="#333"/></svg>
<div id="statusbar" class="a">
<svg class="a" style="left:0;top:0" width="250" height="28" viewBox="0 846 250 28"><g fill="none" stroke="#c4c6c8" stroke-width="1.4"><circle cx="19.3" cy="856.3" r="1.7"/><circle cx="19.3" cy="867.9" r="1.7"/><circle cx="26.6" cy="858.8" r="1.7"/><path d="M19.3 858 L19.3 866.2 M26.6 860.5 Q26.6 864.5 20.6 866.6"/></g><g fill="none" stroke="#c4c6c8" stroke-width="2"><path d="M110.5 861.5 A5.4 5.4 0 0 1 120 858"/><path d="M121.7 862.5 A5.4 5.4 0 0 1 112.2 866"/></g><path d="M117.5 855 L122.7 855 L122.7 860.3 Z M114.7 869.2 L109.5 869.2 L109.5 864 Z" fill="#c4c6c8"/><circle cx="186.8" cy="861.9" r="7.2" fill="#c4c6c8"/><path d="M183.6 858.7 L190 865.1 M190 858.7 L183.6 865.1" stroke="#26292e" stroke-width="2"/><path d="M221.9 854.6 L229.4 869 L214.4 869 Z" fill="#c4c6c8" stroke="#c4c6c8" stroke-width="0.8" stroke-linejoin="round"/><rect x="221" y="859" width="1.9" height="5.8" fill="#26292e"/><rect x="221" y="866" width="1.9" height="1.7" fill="#26292e"/></svg>
<svg class="a" style="left:1170px;top:0" width="30" height="28" viewBox="1170 846 30 28"><path d="M1177.2 868 L1192.8 868 Q1190.6 866 1190.4 862.5 Q1190.3 856.7 1185.8 855.8 L1185.8 855 Q1185 853.8 1184.2 855 L1184.2 855.8 Q1179.7 856.7 1179.6 862.5 Q1179.4 866 1177.2 868 Z" fill="#c4c6c8"/><circle cx="1185" cy="869.5" r="1.6" fill="#c4c6c8"/></svg>
<span class="s" style="left:33.2px">master*</span>
<span class="s" style="left:127.5px">1↓ 0↑</span>
<span class="s" style="left:200.4px">0</span>
<span class="s" style="left:234.7px">0</span>
<span class="s" style="left:730.3px">Ln 108, Col 1</span>
<span class="s" style="left:840px">Tab Size: 4</span>
<span class="s" style="left:932.2px">UTF-8</span>
<span class="s" style="left:993.6px">LF</span>
<span class="s" style="left:1029.7px">TypeScript</span>
<span class="s" style="left:1124.3px">3.3.1</span>
</div>
</body></html>
